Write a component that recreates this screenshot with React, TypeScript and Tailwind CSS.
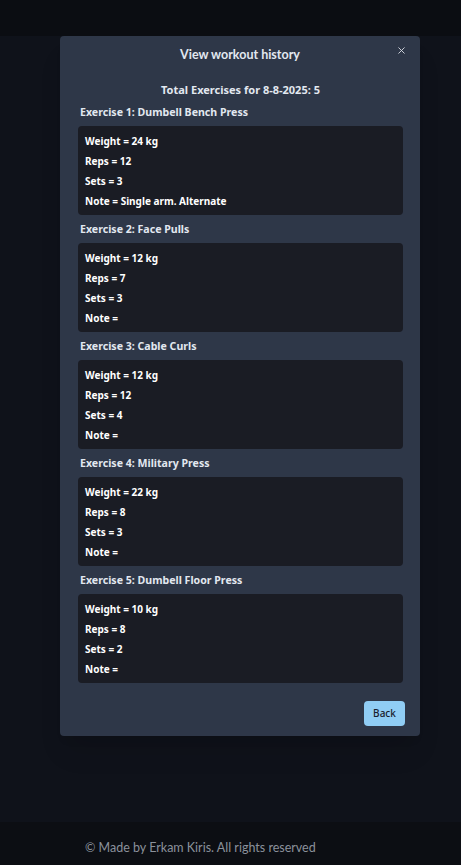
import { X } from 'lucide-react';

interface Exercise {
  name: string;
  weight: number;
  reps: number;
  sets: number;
  note: string;
}

const EXERCISES: Exercise[] = [
  { name: 'Dumbell Bench Press', weight: 24, reps: 12, sets: 3, note: 'Single arm. Alternate' },
  { name: 'Face Pulls', weight: 12, reps: 7, sets: 3, note: '' },
  { name: 'Cable Curls', weight: 12, reps: 12, sets: 4, note: '' },
  { name: 'Military Press', weight: 22, reps: 8, sets: 3, note: '' },
  { name: 'Dumbell Floor Press', weight: 10, reps: 8, sets: 2, note: '' },
];

const FONT = { fontFamily: '"Noto Sans", "Open Sans", sans-serif' };
const NARROW = { fontFamily: 'Lato, "Noto Sans", sans-serif' };

function ExerciseCard({ exercise, index }: { exercise: Exercise; index: number }) {
  return (
    <div className="flex flex-col gap-[6px]">
      <h4 className="pl-[2px] text-[10.6px] font-bold leading-[16px] text-[#e2e8f0]">
        Exercise {index + 1}: {exercise.name}
      </h4>
      <div className="rounded-[4px] bg-[#1a1c24] px-[7px] pt-[5px] pb-[4px] text-[10px] font-bold leading-[20px] text-white">
        <p>Weight = {exercise.weight} kg</p>
        <p>Reps = {exercise.reps}</p>
        <p>Sets = {exercise.sets}</p>
        <p>Note = {exercise.note}</p>
      </div>
    </div>
  );
}

export default function App() {
  return (
    <div className="relative flex h-[865px] w-full flex-col bg-[#0f121a]" style={FONT}>
      <header className="h-[36px] shrink-0 bg-[#0b0d12]" />
      <main className="flex-1 bg-[#0f121a]" />
      <footer
        className="flex h-[43px] shrink-0 items-center bg-[#0c0e13] pl-[85px] pt-[9px] text-[12.5px] text-[#8b919b]"
        style={NARROW}
      >
        © Made by Erkam Kiris. All rights reserved
      </footer>

      {/* modal */}
      <div className="absolute left-[60px] top-[36px] w-[360px] rounded-[4px] bg-[#2e3748] shadow-xl">
        <button className="absolute right-[12px] top-[8px] p-[1px] text-[#d6dbe3]">
          <X size={11} strokeWidth={2} />
        </button>
        <h2
          className="pt-[9px] text-center text-[12.5px] font-bold leading-[20px] text-[#e2e8f0]"
          style={NARROW}
        >
          View workout history
        </h2>
        <div className="px-[18px] pr-[17px] pt-[17px]">
          <p className="mb-[6px] text-center text-[11px] font-bold leading-[16px] text-[#e2e8f0]">
            Total Exercises for 8-8-2025: {EXERCISES.length}
          </p>
          <div className="flex flex-col gap-[6px]">
            {EXERCISES.map((ex, i) => (
              <ExerciseCard key={ex.name} exercise={ex} index={i} />
            ))}
          </div>
        </div>
        <div className="flex justify-end px-[15px] pt-[18px] pb-[10px]">
          <button className="h-[25px] w-[41px] rounded-[4px] bg-[#90cdf4] text-[10px] font-medium text-[#1a202c]">
            Back
          </button>
        </div>
      </div>
    </div>
  );
}
